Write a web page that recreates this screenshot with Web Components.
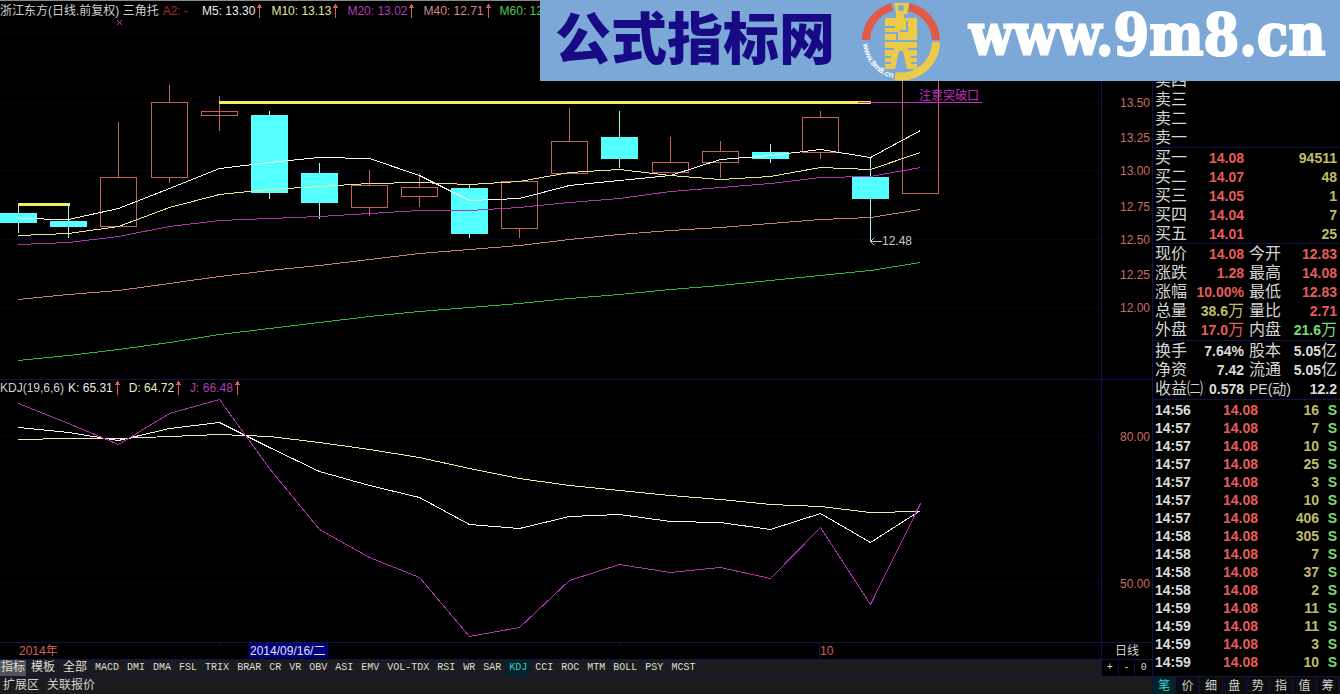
<!DOCTYPE html>
<html lang="zh-CN">
<head>
<meta charset="utf-8">
<title>浙江东方 日线</title>
<style>
  body {
    margin: 0;
    background: #000;
    color: #d0d0d0;
    font: 12px/16px "Liberation Sans", "Noto Sans CJK SC", sans-serif;
  }
</style>
</head>
<body>
<stock-terminal>
  <site-banner slot="banner" name="公式指标网" url="www.9m8.cn"></site-banner>

  <price-chart slot="price">
    <span slot="title">浙江东方(日线.前复权) 三角托</span>
    <indicator-value color="#a82a2a" flat>A2: -</indicator-value>
    <indicator-value color="#ececec">M5: 13.30</indicator-value>
    <indicator-value color="#e4e49c">M10: 13.13</indicator-value>
    <indicator-value color="#b43cb4">M20: 13.02</indicator-value>
    <indicator-value color="#d08a80">M40: 12.71</indicator-value>
    <indicator-value color="#50c850" flat>M60: 12</indicator-value>
  </price-chart>
  <value-axis slot="price-axis" height="379" labels="13.50@102 13.25@137 13.00@170 12.75@206 12.50@239 12.25@274 12.00@307"></value-axis>

  <kdj-chart slot="kdj">
    <span slot="title">KDJ(19,6,6)</span>
    <indicator-value color="#ececec">K: 65.31</indicator-value>
    <indicator-value color="#ececc0">D: 64.72</indicator-value>
    <indicator-value color="#b43cb4">J: 66.48</indicator-value>
  </kdj-chart>
  <value-axis slot="kdj-axis" height="262" labels="80.00@56 50.00@203"></value-axis>

  <date-axis slot="dates"></date-axis>
  <span slot="period">日线</span>
  <indicator-tabs slot="tabs" active="KDJ" items="指标 模板 全部 MACD DMI DMA FSL TRIX BRAR CR VR OBV ASI EMV VOL-TDX RSI WR SAR KDJ CCI ROC MTM BOLL PSY MCST"></indicator-tabs>
  <zoom-buttons slot="zoom"></zoom-buttons>
  <extension-bar slot="extensions"></extension-bar>
  <quote-panel slot="quote"></quote-panel>
</stock-terminal>

<script>
const STEP = 50.1;
const FIRST = 18.2;
const xAt = (i) => Math.round(FIRST + i * STEP);

function line(values, color, top = 0) {
  const points = values.map((y, i) => `${xAt(i)},${y - top}`).join(" ");
  return `<polyline points="${points}" stroke="${color}"/>`;
}

class StockTerminal extends HTMLElement {
  constructor() {
    super();
    this.attachShadow({ mode: "open" }).innerHTML = `
      <style>
        :host {
          --rule: #12124e;
          position: relative;
          display: grid;
          grid-template-columns: minmax(0, 1fr) 188px;
          min-height: 100vh;
          overflow: hidden;
        }
        main {
          display: grid;
          grid-template-columns: minmax(0, 1fr) 51px;
          grid-template-rows: minmax(0, 379fr) minmax(0, 263fr) 17px 17px 18px;
        }
        .axis { border-left: 1px solid var(--rule); }
        .kdj { border-top: 1px solid var(--rule); }
        .axis.kdj { border-color: #0c0c70; }
        .dates { border-top: 1px solid var(--rule); }
        .period { text-align: center; }
        .tabs { border-top: 1px solid var(--rule); background: #1c1c1c; }
        .zoom { background: #000; }
        .extensions {
          grid-column: 1 / -1;
          border-top: 1px solid var(--rule);
          background: #1c1c1c;
        }
        .kdj, .price, .axis { min-height: 0; overflow: hidden; }
        .banner {
          position: absolute;
          top: 0;
          right: 0;
          width: 800px;
          max-width: 100%;
        }
      </style>
      <main>
        <div class="price"><slot name="price"></slot></div>
        <div class="axis"><slot name="price-axis"></slot></div>
        <div class="kdj"><slot name="kdj"></slot></div>
        <div class="axis kdj"><slot name="kdj-axis"></slot></div>
        <div class="dates"><slot name="dates"></slot></div>
        <div class="axis dates period"><slot name="period"></slot></div>
        <div class="tabs"><slot name="tabs"></slot></div>
        <div class="axis tabs zoom"><slot name="zoom"></slot></div>
        <div class="extensions"><slot name="extensions"></slot></div>
      </main>
      <slot name="quote"></slot>
      <div class="banner"><slot name="banner"></slot></div>
    `;
  }
}

class SiteBanner extends HTMLElement {
  connectedCallback() {
    this.attachShadow({ mode: "open" }).innerHTML = `
      <style>
        :host {
          display: flex;
          align-items: center;
          box-sizing: border-box;
          height: 81px;
          padding-left: 15px;
          background: #7ba8d6;
          white-space: nowrap;
        }
        .name, .url { padding-bottom: 12px; }
        .name {
          width: 306px;
          color: #170a84;
          font: 900 56px/68px "Noto Sans CJK SC", sans-serif;
        }
        svg { flex: none; width: 80px; height: 80px; }
        .url {
          margin-left: 28px;
          color: #fff;
          font: bold 57px/68px "DejaVu Serif Condensed", "DejaVu Serif", serif;
          -webkit-text-stroke: 2px #fff;
          text-decoration: none;
        }
      </style>
      <div class="name">${this.getAttribute("name")}</div>
      <svg viewBox="0 0 80 80" role="img" aria-label="logo">
        <g fill="none" stroke-width="8">
          <path d="M5 39A35 35 0 0 1 31 6M48 6A35 35 0 0 1 75 39" stroke="#e05a48"/>
          <path d="M75 41A35 35 0 0 1 34 75" stroke="#eccb48"/>
        </g>
        <path fill="#eccb48" d="M33 2h15l-2 11h-3v4h13v22H24V17h11v-4z"/>
        <path fill="#eccb48" d="M24 41h32v27H46l-4-18h-4l-4 18H24z"/>
        <circle cx="40" cy="7" r="3" fill="#7ba8d6"/>
        <path stroke="#7ba8d6" stroke-width="2" fill="none" d="M24 26h10M24 32h12v7M46 20v10h-7M24 48h9M47 48h9M24 56h6M50 56h6M24 62h6M50 62h6"/>
        <path id="ring" fill="none" d="M2 43A38 38 0 0 0 32 77"/>
        <text fill="#fff" font-family="Liberation Sans" font-weight="bold" font-size="8"><textPath href="#ring">www.9m8.cn</textPath></text>
      </svg>
      <a class="url" href="#">${this.getAttribute("url")}</a>
    `;
  }
}

class IndicatorValue extends HTMLElement {
  connectedCallback() {
    const arrow = this.hasAttribute("flat") ? "" : `
      <svg viewBox="0 0 7 16" aria-hidden="true">
        <path d="M3 1h1v14H3zM2 2h3v2H2zM1 4h5v1H1z" fill="#dc5a5a"/>
      </svg>`;
    this.attachShadow({ mode: "open" }).innerHTML = `
      <style>
        :host {
          display: flex;
          gap: 1px;
          color: ${this.getAttribute("color")};
          white-space: nowrap;
        }
        :host([flat]) { margin-right: 6px; }
        svg { width: 7px; height: 16px; }
      </style>
      <slot></slot>${arrow}
    `;
  }
}

const chartStyles = `
  :host { position: relative; display: block; height: 100%; }
  header {
    position: absolute;
    top: 0;
    left: 0;
    display: flex;
    gap: 8px;
    white-space: nowrap;
  }
  ::slotted([slot="title"]) { margin-right: -4px; }
  svg.plot { display: block; width: 100%; height: 100%; }
  polyline, path { fill: none; }
  .lines, .candles { shape-rendering: crispEdges; }
  polyline { transform: translate(.5px, .5px); }
  .grid { stroke: #060620; shape-rendering: crispEdges; }
`;

class PriceChart extends HTMLElement {
  // body top, body bottom, high, low, closed lower
  static candles = [
    [213, 223, 204, 233, 1], [221, 227, 205, 238, 1], [177, 226, 122, 226, 0],
    [102, 177, 85, 183, 0], [111, 115, 96, 131, 0], [115, 193, 111, 199, 1],
    [173, 203, 163, 219, 1], [185, 207, 170, 216, 0], [187, 196, 173, 207, 0],
    [188, 234, 184, 238, 1], [181, 228, 181, 238, 0], [141, 173, 108, 173, 0],
    [137, 159, 111, 168, 1], [162, 172, 137, 172, 0], [151, 162, 141, 178, 0],
    [152, 159, 144, 163, 1], [117, 152, 111, 159, 0], [177, 199, 157, 241, 1],
    [60, 193, 60, 193, 0],
  ];

  candle([top, bottom, high, low, down], i) {
    const x = xAt(i);
    if (down) {
      return `<path d="M${x}.5 ${high}V${low}" stroke="#a8f4f0"/>
        <rect x="${x - 18}" y="${top}" width="37" height="${bottom - top}" fill="#54ffff"/>`;
    }
    const wick = i === 4 ? `M${x}.5 ${high}V${low}` : `M${x}.5 ${high}V${top}M${x}.5 ${bottom}V${low}`;
    return `<path d="${wick}" stroke="#c46458"/>
      <rect x="${x - 18}.5" y="${top}.5" width="36" height="${bottom - top}" fill="none" stroke="#c46458"/>`;
  }

  connectedCallback() {
    this.attachShadow({ mode: "open" }).innerHTML = `
      <style>
        ${chartStyles}
        :host { box-sizing: border-box; border-top: 1px solid #8c8a86; }
        header { padding-top: 2px; }
      </style>
      <svg class="plot" viewBox="0 1 1101 378" preserveAspectRatio="xMinYMin meet">
        <path class="grid" d="M0 33.5H1101M0 102.5H1101M0 170.5H1101M0 239.5H1101M0 307.5H1101"/>
        <g class="candles">${PriceChart.candles.map((c, i) => this.candle(c, i)).join("")}</g>
        <g class="lines">
          ${line([218, 219, 208, 188, 168, 162, 157, 158, 175, 200, 198, 185, 180, 175, 159, 155, 149, 157, 130], "#f4f4f4")}
          ${line([235, 233, 226, 207, 194, 189, 186, 183, 182, 184, 181, 172, 169, 175, 179, 176, 167, 169, 152], "#e8e890")}
          ${line([244, 242, 236, 226, 220, 218, 216, 213, 210, 210, 207, 202, 198, 191, 187, 183, 177, 176, 167], "#b034b0")}
          ${line([299, 294, 290, 283, 276, 270, 265, 259, 253, 249, 245, 239, 234, 230, 227, 223, 219, 217, 209], "#cc8074")}
          ${line([360, 355, 349, 342, 334, 328, 322, 316, 311, 307, 303, 298, 294, 289, 285, 280, 275, 270, 262], "#30b838")}
          <path d="M18 204.5H70M219 102.5H871" stroke="#f4ee60" stroke-width="3"/>
          <path d="M858 102.5H982" stroke="#c030c0"/>
          <path d="M871 241.5H882M874 238l-3 3.5l3 3.5" stroke="#c8c8c8"/>
        </g>
        <path d="M117 20l5 5M122 20l-5 5" stroke="#c040c0"/>
        <text x="919" y="100" fill="#c030c0" font-size="12">注意突破口</text>
        <text x="882" y="245" fill="#c8c8c8" font-size="12">12.48</text>
      </svg>
      <header><slot name="title"></slot><slot></slot></header>
    `;
  }
}

class KdjChart extends HTMLElement {
  connectedCallback() {
    this.attachShadow({ mode: "open" }).innerHTML = `
      <style>${chartStyles}</style>
      <svg class="plot" viewBox="0 0 1101 262" preserveAspectRatio="xMinYMin meet">
        <path class="grid" d="M0 56.5H1101M0 202.5H1101"/>
        <g class="lines">
          ${line([439, 438, 438, 436, 434, 436, 442, 449, 457, 468, 478, 485, 490, 495, 499, 504, 506, 512, 511], "#ececa8", 380)}
          ${line([427, 432, 440, 428, 422, 447, 471, 485, 497, 524, 528, 516, 514, 521, 522, 529, 513, 542, 510], "#f4f4f4", 380)}
          ${line([403, 423, 444, 413, 399, 468, 529, 557, 577, 636, 627, 580, 564, 572, 567, 578, 527, 604, 503], "#b034b0", 380)}
        </g>
      </svg>
      <header><slot name="title"></slot><slot></slot></header>
    `;
  }
}

class ValueAxis extends HTMLElement {
  connectedCallback() {
    const labels = this.getAttribute("labels").split(" ").map((item) => {
      const [text, y] = item.split("@");
      return `<text x="48" y="${Number(y) + 5}">${text}</text>`;
    });
    this.attachShadow({ mode: "open" }).innerHTML = `
      <style>
        :host { display: block; height: 100%; }
        svg { display: block; width: 100%; height: 100%; }
        text { fill: #cc6c60; font-size: 12px; text-anchor: end; }
      </style>
      <svg viewBox="0 0 50 ${this.getAttribute("height")}" preserveAspectRatio="xMaxYMin meet">${labels.join("")}</svg>
    `;
  }
}

class DateAxis extends HTMLElement {
  constructor() {
    super();
    this.attachShadow({ mode: "open" }).innerHTML = `
      <style>
        :host { display: block; }
        svg { display: block; width: 100%; height: 16px; }
        text { font-size: 12px; fill: #d06058; }
        .current { fill: #e0e0f0; }
      </style>
      <svg viewBox="0 0 1101 16" preserveAspectRatio="xMinYMin meet">
        <path d="M219.5 0v3M619.5 0v3M819.5 0v16" stroke="#12124e"/>
        <rect x="249" y="0" width="79" height="15" fill="#00007c"/>
        <text x="19" y="12">2014年</text>
        <text class="current" x="250" y="12">2014/09/16/二</text>
        <text x="820" y="12">10</text>
      </svg>
    `;
  }
}

class IndicatorTabs extends HTMLElement {
  connectedCallback() {
    const active = this.getAttribute("active");
    const tabs = this.getAttribute("items").split(" ").map((name) =>
      `<button class="${name === active ? "active" : ""}">${name}</button>`);
    this.attachShadow({ mode: "open" }).innerHTML = `
      <style>
        :host { display: flex; overflow: hidden; }
        button {
          flex: none;
          height: 16px;
          padding: 0 3px 0 4px;
          border: 0;
          border-right: 1px solid #14143c;
          background: none;
          color: #dcdcdc;
          font: 10px/16px "Liberation Mono", "Noto Sans CJK SC", monospace;
        }
        button:nth-of-type(-n+3) { font-size: 12px; line-height: 14px; }
        button:first-of-type { padding: 0 1px; background: #545454; }
        .active { background: #002428; color: #40c8c8; }
      </style>
      ${tabs.join("")}
    `;
  }
}

class ZoomButtons extends HTMLElement {
  constructor() {
    super();
    this.attachShadow({ mode: "open" }).innerHTML = `
      <style>
        :host { display: grid; grid-template-columns: repeat(3, 1fr); }
        button {
          height: 16px;
          padding: 0;
          border: 0;
          border-right: 1px solid #12124e;
          background: #000;
          color: #d8d8d8;
          font: 10px/16px "Liberation Mono", monospace;
        }
        button:last-of-type { border: 0; }
      </style>
      <button>+</button><button>-</button><button>0</button>
    `;
  }
}

class ExtensionBar extends HTMLElement {
  constructor() {
    super();
    this.attachShadow({ mode: "open" }).innerHTML = `
      <style>
        :host { display: flex; }
        button {
          height: 16px;
          padding: 0 4px 0 3px;
          border: 0;
          border-right: 1px solid #14143c;
          background: none;
          color: #d0d0d0;
          font: 12px/16px "Liberation Sans", "Noto Sans CJK SC", sans-serif;
        }
      </style>
      <button>扩展区</button><button>关联报价</button>
    `;
  }
}

class QuotePanel extends HTMLElement {
  static bids = [
    ["买一", "14.08", "94511"], ["买二", "14.07", "48"], ["买三", "14.05", "1"],
    ["买四", "14.04", "7"], ["买五", "14.01", "25"],
  ];
  static stats = [
    ["现价", "14.08", "up", "今开", "12.83", "up"],
    ["涨跌", "1.28", "up", "最高", "14.08", "up"],
    ["涨幅", "10.00%", "up", "最低", "12.83", "up"],
    ["总量", "38.6万", "volume", "量比", "2.71", "up"],
    ["外盘", "17.0万", "up", "内盘", "21.6万", "down"],
  ];
  static basics = [
    ["换手", "7.64%", "", "股本", "5.05亿", ""],
    ["净资", "7.42", "", "流通", "5.05亿", ""],
    ["收益㈡", "0.578", "", "<small>PE(动)</small>", "12.2", ""],
  ];
  static ticks = [
    ["14:56", 16], ["14:57", 7], ["14:57", 10], ["14:57", 25], ["14:57", 3],
    ["14:57", 10], ["14:57", 406], ["14:58", 305], ["14:58", 7], ["14:58", 37],
    ["14:58", 2], ["14:59", 11], ["14:59", 11], ["14:59", 3], ["14:59", 10],
  ];

  unit(value) {
    return value.replace(/[万亿]/, "<span>$&</span>");
  }

  pairs(rows) {
    return rows.map(([a, av, ac, b, bv, bc]) => `
      <tr><th>${a}</th><td class="${ac}">${this.unit(av)}</td>
      <th class="second">${b}</th><td class="${bc}">${this.unit(bv)}</td></tr>`).join("");
  }

  connectedCallback() {
    const cols = `<colgroup><col class="label"><col class="value"><col class="label2"><col></colgroup>`;
    this.attachShadow({ mode: "open" }).innerHTML = `
      <style>
        :host {
          display: flex;
          flex-direction: column;
          border-left: 1px solid #12124e;
          padding-top: 71px;
        }
        section { padding: 0 3px 1px 2px; border-bottom: 1px solid #12124e; }
        section.asks, section.bids { padding-bottom: 0; }
        section.ticks { padding-top: 1px; border: 0; }
        table { width: 100%; border-collapse: collapse; table-layout: fixed; }
        tr { height: 19px; }
        th, td { padding: 0; line-height: 18px; white-space: nowrap; }
        th { color: #d4d4d4; font-size: 16px; font-weight: normal; text-align: left; }
        td { color: #dcdcdc; font-size: 14px; font-weight: bold; text-align: right; }
        span { font-size: 16px; font-weight: normal; line-height: 0; }
        small { font-size: 14px; }
        .label { width: 32px; }
        .value { width: 57px; }
        .label2 { width: 37px; }
        .second { padding-left: 5px; }
        .up { color: #e85c5c; }
        .down, .side { color: #78dc70; }
        .volume { color: #c0bc68; }
        .ticks tr { height: 18px; }
        .time { width: 36px; }
        .price { width: 67px; }
        .count { width: 61px; }
        .ticks td:first-child { text-align: left; }
        nav {
          display: grid;
          grid-template-columns: repeat(8, 1fr);
          margin-top: auto;
          border-top: 1px solid #12124e;
        }
        button {
          height: 17px;
          padding: 0;
          border: 0;
          border-right: 1px solid #12124e;
          background: #0c0c0c;
          color: #d0d0d0;
          font: 12px/16px "Liberation Sans", "Noto Sans CJK SC", sans-serif;
        }
        button:first-child { background: #002428; color: #40d0d0; }
      </style>
      <section class="asks"><table>
        <tr><th>卖四</th></tr><tr><th>卖三</th></tr><tr><th>卖二</th></tr><tr><th>卖一</th></tr>
      </table></section>
      <section class="bids"><table>
        <colgroup><col class="label"><col class="value"><col></colgroup>
        ${QuotePanel.bids.map(([n, p, v]) =>
          `<tr><th>${n}</th><td class="up">${p}</td><td class="volume">${v}</td></tr>`).join("")}
      </table></section>
      <section><table>${cols}${this.pairs(QuotePanel.stats)}</table></section>
      <section><table>${cols}${this.pairs(QuotePanel.basics)}</table></section>
      <section class="ticks"><table>
        <colgroup><col class="time"><col class="price"><col class="count"><col></colgroup>
        ${QuotePanel.ticks.map(([t, v]) =>
          `<tr><td>${t}</td><td class="up">14.08</td><td class="volume">${v}</td><td class="side">S</td></tr>`).join("")}
      </table></section>
      <nav>${[..."笔价细盘势指值筹"].map((c) => `<button>${c}</button>`).join("")}</nav>
    `;
  }
}

customElements.define("stock-terminal", StockTerminal);
customElements.define("site-banner", SiteBanner);
customElements.define("indicator-value", IndicatorValue);
customElements.define("price-chart", PriceChart);
customElements.define("kdj-chart", KdjChart);
customElements.define("value-axis", ValueAxis);
customElements.define("date-axis", DateAxis);
customElements.define("indicator-tabs", IndicatorTabs);
customElements.define("zoom-buttons", ZoomButtons);
customElements.define("extension-bar", ExtensionBar);
customElements.define("quote-panel", QuotePanel);
</script>
</body>
</html>
